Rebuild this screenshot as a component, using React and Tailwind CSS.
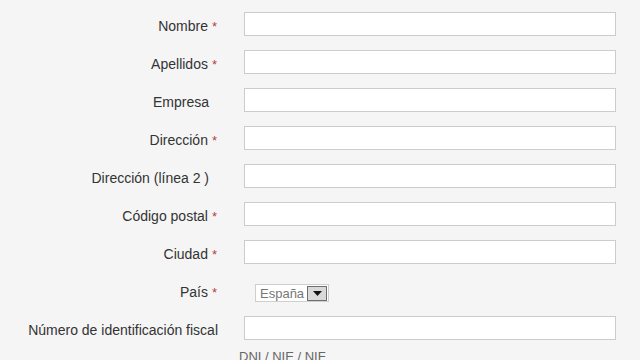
import React from "react";

const rows = [
  { label: "Nombre", req: true },
  { label: "Apellidos", req: true },
  { label: "Empresa", req: false },
  { label: "Dirección", req: true },
  { label: "Dirección (línea 2 )", req: false },
  { label: "Código postal", req: true },
  { label: "Ciudad", req: true },
];

function Label({ label, req, pad }) {
  return (
    <div className="w-[220px] shrink-0 flex justify-end items-center pt-[5px]">
      <span>{label}</span>
      {req ? (
        <span className="ml-[4px] mr-[3px] text-[13px] text-[#b0453d]">*</span>
      ) : (
        <span className={pad ? "w-[11px]" : "w-[2px]"} />
      )}
    </div>
  );
}

export default function App() {
  return (
    <div
      className="w-[640px] h-[360px] overflow-hidden bg-[#f5f5f5] text-[14px] text-[#333] pt-[12px]"
      style={{ fontFamily: '"Liberation Sans", Arial, sans-serif' }}
    >
      <div className="flex flex-col gap-[14px]">
        {rows.map((r) => (
          <div key={r.label} className="flex h-[24px]">
            <Label label={r.label} req={r.req} pad />
            <input
              type="text"
              className="ml-[24px] w-[372px] h-[24px] bg-white border border-[#cccccc] outline-none"
            />
          </div>
        ))}
        <div className="flex h-[24px]">
          <Label label="País" req />
          <div className="ml-[35px] mt-[6px] flex items-center h-[18px] w-[74px] border border-[#cfcfcf] bg-white">
            <span className="pl-[4px] text-[13px] text-[#777] flex-1 leading-none">España</span>
            <span className="mr-[1px] w-[20px] h-[15px] border border-[#6f6f6f] bg-[#d9d9d9] flex items-center justify-center">
              <svg width="9" height="5" viewBox="0 0 9 5">
                <path d="M0 0H9L4.5 5Z" fill="#111" />
              </svg>
            </span>
          </div>
        </div>
        <div className="flex flex-col">
          <div className="flex h-[24px]">
            <Label label="Número de identificación fiscal" req={false} />
            <input
              type="text"
              className="ml-[24px] w-[372px] h-[24px] bg-white border border-[#cccccc] outline-none"
            />
          </div>
          <div className="pl-[239px] pt-[7px] text-[13px] text-[#666]">DNI / NIE / NIF</div>
        </div>
      </div>
    </div>
  );
}
